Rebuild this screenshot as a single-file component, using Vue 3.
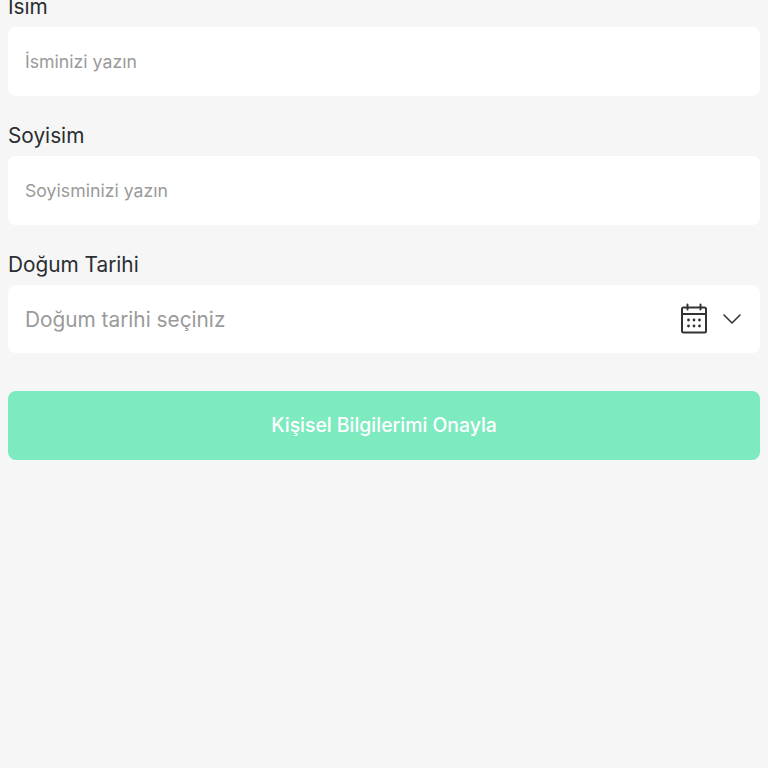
<template>
  <div class="page">
    <form class="form" @submit.prevent>
      <div class="form-group">
        <label for="name">Isim</label>
        <input id="name" type="text" placeholder="İsminizi yazın" />
      </div>
      <div class="form-group">
        <label for="surname">Soyisim</label>
        <input id="surname" type="text" placeholder="Soyisminizi yazın" />
      </div>
      <div class="form-group">
        <label>Doğum Tarihi</label>
        <div class="date-select">
          <span class="date-text">Doğum tarihi seçiniz</span>
          <svg class="calendar" width="28" height="32" viewBox="0 0 28 32" fill="none" stroke="#333" stroke-width="2">
            <rect x="2" y="4.5" width="24" height="25" rx="1.5" />
            <path d="M2 11h24" />
            <path d="M7.5 1.5v5M20.5 1.5v5" stroke-linecap="round" />
            <g fill="#333" stroke="none">
              <circle cx="8.5" cy="17" r="1.4" />
              <circle cx="14" cy="17" r="1.4" />
              <circle cx="19.5" cy="17" r="1.4" />
              <circle cx="8.5" cy="23" r="1.4" />
              <circle cx="14" cy="23" r="1.4" />
              <circle cx="19.5" cy="23" r="1.4" />
            </g>
          </svg>
          <svg class="chevron" width="18" height="10" viewBox="0 0 18 10" fill="none" stroke="#333" stroke-width="1.6">
            <path d="M1 1l8 8 8-8" stroke-linecap="round" stroke-linejoin="round" />
          </svg>
        </div>
      </div>
      <button type="submit">Kişisel Bilgilerimi Onayla</button>
    </form>
  </div>
</template>

<script setup>
</script>

<style>
html,
body {
  background: #f6f6f6;
}
</style>

<style scoped>
.page {
  height: 768px;
  overflow: hidden;
  background: #f6f6f6;
  font-family: Inter, "Noto Sans", sans-serif;
}

.form {
  margin-top: -12px;
  padding: 0 8px;
}

.form-group {
  margin-bottom: 21px;
}

label {
  display: block;
  height: 39px;
  line-height: 38px;
  font-size: 20.8px;
  color: #2b2d30;
}

input,
.date-select {
  display: block;
  box-sizing: border-box;
  width: 100%;
  height: 69px;
  padding: 0 17px;
  border: none;
  border-radius: 8px;
  background: #fff;
  font-family: inherit;
  font-size: 17.7px;
  outline: none;
}

input::placeholder {
  color: #9a9a9a;
  opacity: 1;
}

.date-select {
  display: flex;
  align-items: center;
  height: 68px;
  padding-right: 19px;
}

.date-text {
  flex: 1;
  font-size: 20.8px;
  color: #9a9a9a;
}

.chevron {
  margin-left: 15px;
}

button {
  display: block;
  width: 100%;
  height: 69px;
  margin-top: 38px;
  padding: 0 0 2px;
  border: none;
  border-radius: 8px;
  background: #7deac0;
  color: #fff;
  font-family: inherit;
  font-size: 19.4px;
  font-weight: 500;
  cursor: pointer;
}
</style>
